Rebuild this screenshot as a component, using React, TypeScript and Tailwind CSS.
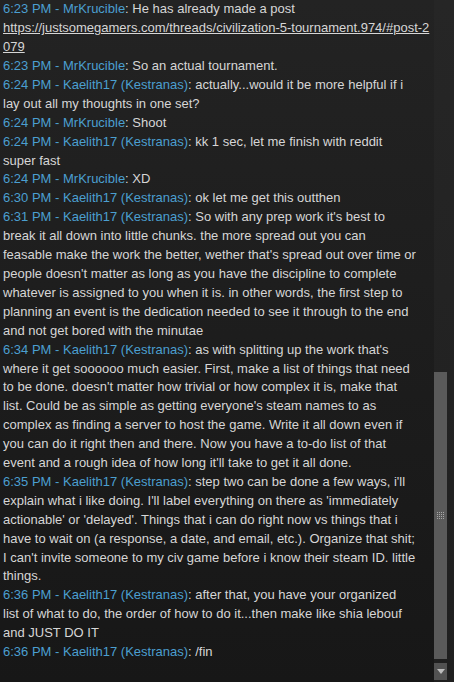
// each message keeps the line breaks of the original chat window
const messages = [
  { t: '6:23 PM', who: 'MrKrucible', lines: ['He has already made a post'], link: true },
  { t: '6:23 PM', who: 'MrKrucible', lines: ['So an actual tournament.'] },
  {
    t: '6:24 PM',
    who: 'Kaelith17 (Kestranas)',
    lines: ['actually...would it be more helpful if i', 'lay out all my thoughts in one set?'],
  },
  { t: '6:24 PM', who: 'MrKrucible', lines: ['Shoot'] },
  { t: '6:24 PM', who: 'Kaelith17 (Kestranas)', lines: ['kk 1 sec, let me finish with reddit', 'super fast'] },
  { t: '6:24 PM', who: 'MrKrucible', lines: ['XD'] },
  { t: '6:30 PM', who: 'Kaelith17 (Kestranas)', lines: ['ok let me get this outthen'] },
  {
    t: '6:31 PM',
    who: 'Kaelith17 (Kestranas)',
    lines: [
      "So with any prep work it's best to",
      'break it all down into little chunks. the more spread out you can',
      "feasable make the work the better, wether that's spread out over time or",
      "people doesn't matter as long as you have the discipline to complete",
      'whatever is assigned to you when it is. in other words, the first step to',
      'planning an event is the dedication needed to see it through to the end',
      'and not get bored with the minutae',
    ],
  },
  {
    t: '6:34 PM',
    who: 'Kaelith17 (Kestranas)',
    lines: [
      "as with splitting up the work that's",
      'where it get soooooo much easier. First, make a list of things that need',
      "to be done. doesn't matter how trivial or how complex it is, make that",
      "list. Could be as simple as getting everyone's steam names to as",
      'complex as finding a server to host the game. Write it all down even if',
      'you can do it right then and there. Now you have a to-do list of that',
      "event and a rough idea of how long it'll take to get it all done.",
    ],
  },
  {
    t: '6:35 PM',
    who: 'Kaelith17 (Kestranas)',
    lines: [
      "step two can be done a few ways, i'll",
      "explain what i like doing. I'll label everything on there as 'immediately",
      "actionable' or 'delayed'. Things that i can do right now vs things that i",
      'have to wait on (a response, a date, and email, etc.). Organize that shit;',
      "I can't invite someone to my civ game before i know their steam ID. little",
      'things.',
    ],
  },
  {
    t: '6:36 PM',
    who: 'Kaelith17 (Kestranas)',
    lines: [
      'after that, you have your organized',
      'list of what to do, the order of how to do it...then make like shia lebouf',
      'and JUST DO IT',
    ],
  },
  { t: '6:36 PM', who: 'Kaelith17 (Kestranas)', lines: ['/fin'] },
]

function Grip() {
  const dots = []
  for (let r = 0; r < 4; r++) {
    for (let c = 0; c < 4; c++) {
      dots.push(<rect key={`${r}-${c}`} x={c * 2} y={r * 2} width="1" height="1" fill="#a8a8a8" />)
    }
  }
  return (
    <svg width="7" height="7" viewBox="0 0 7 7">
      {dots}
    </svg>
  )
}

export default function App() {
  return (
    <div className="flex h-[682px] w-[454px] overflow-hidden bg-gradient-to-b from-[#232323] to-[#171717] font-['Liberation_Sans',Arial,sans-serif] text-[13px] leading-[18.9px] text-[#d6d6d6]">
      <div className="flex min-w-0 flex-1 flex-col justify-end overflow-hidden whitespace-nowrap pb-[20px] pl-[3px] pr-[13px]">
        {messages.map((m, i) => (
          <div key={i}>
            <span className="text-[#4b9fd0]">
              {m.t} - {m.who}
            </span>
            {m.lines.map((line, j) => (
              <span key={j}>
                {j === 0 ? ': ' : <br />}
                {line}
              </span>
            ))}
            {m.link && (
              <a className="block underline">
                https://justsomegamers.com/threads/civilization-5-tournament.974/#post-2
                <br />
                079
              </a>
            )}
          </div>
        ))}
      </div>

      <div className="flex w-[20px] shrink-0 flex-col bg-gradient-to-b from-[#262626] to-[#1f1f1f] pb-[2px]">
        <div className="flex-1 pt-[372px]">
          <div className="flex h-[287px] w-[13px] items-center justify-center bg-[#5a5a5a]">
            <Grip />
          </div>
        </div>
        <div className="mt-[4px] flex h-[17px] w-[13px] items-center justify-center bg-[#525252]">
          <svg width="8" height="5" viewBox="0 0 8 5">
            <path d="M0 0H8L4 5Z" fill="#bdbdbd" />
          </svg>
        </div>
      </div>
    </div>
  )
}
